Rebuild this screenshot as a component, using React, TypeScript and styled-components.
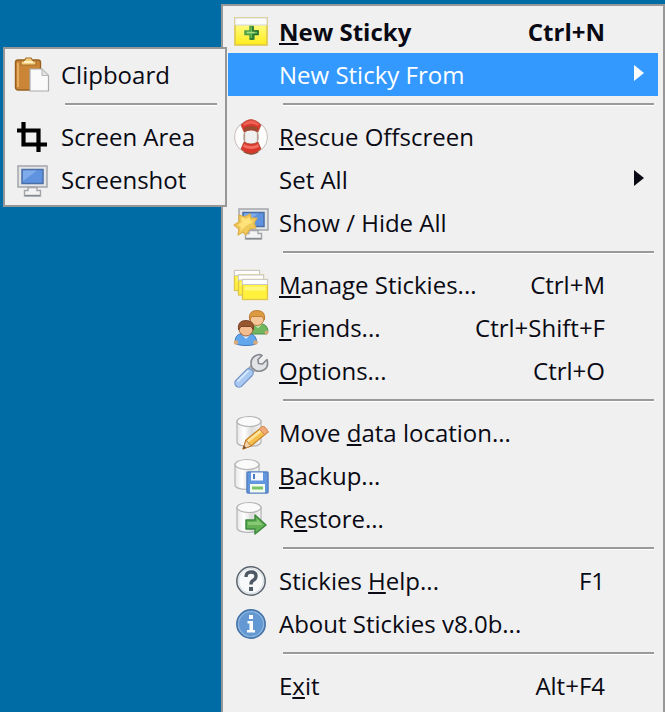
import React from 'react';
import styled, { createGlobalStyle } from 'styled-components';

const GlobalStyle = createGlobalStyle`
  * { box-sizing: border-box; }
  body {
    margin: 0;
    background: #006ca5;
    font-family: "Open Sans", "Noto Sans", sans-serif;
    font-size: 24px;
  }
`;

const Desktop = styled.main`
  display: flex;
  min-height: 100vh;
  padding: 4px 0 0 221px;
  background: #006ca5;
`;

const Menu = styled.div`
  position: relative;
  flex: 1;
  display: flex;
  flex-direction: column;
  padding: 4px 5px;
  background: #f0f0f0;
  border: 2px solid #979797;
  border-bottom-width: 0;
`;

const Submenu = styled.div`
  position: absolute;
  top: 41px;
  left: -220px;
  width: 224px;
  display: flex;
  flex-direction: column;
  padding: 4px 4px 4px 5px;
  background: #f0f0f0;
  border: 2px solid #979797;
`;

const Item = styled.button<{ $active?: boolean; $bold?: boolean }>`
  display: flex;
  align-items: center;
  height: 43px;
  padding: 0 0 0 4px;
  margin: 0;
  border: 0;
  text-align: left;
  font: inherit;
  font-weight: ${p => (p.$bold ? 700 : 400)};
  line-height: 43px;
  white-space: nowrap;
  color: ${p => (p.$active ? '#fff' : '#0a0a14')};
  background: ${p => (p.$active ? '#3399ff' : 'transparent')};
`;

const IconSlot = styled.span`
  display: flex;
  flex: none;
  width: 47px;
`;

const Label = styled.span`
  flex: 1;
  u {
    text-decoration-thickness: 2px;
    text-underline-offset: 2px;
    text-decoration-skip-ink: none;
  }
`;

const Shortcut = styled.kbd`
  font: inherit;
  margin-right: 53px;
`;

const Arrow = styled.svg`
  margin-right: 14px;
`;

const Divider = styled.hr`
  width: auto;
  height: 3px;
  margin: 7px 4px 9px 55px;
  border: 0;
  border-top: 2px solid #9a9a9a;
  border-bottom: 1px solid #fff;
`;

const Glyph = styled.svg`
  display: block;
  width: 37px;
  height: 37px;
`;

const Svg = ({ children }: { children: React.ReactNode }) => (
  <Glyph viewBox="0 0 37 37" aria-hidden="true">{children}</Glyph>
);

const NewNote = () => (
  <Svg>
    <defs>
      <linearGradient id="note" x1="0" y1="0" x2="0" y2="1">
        <stop offset="0" stopColor="#ffffa0" /><stop offset="1" stopColor="#ffec1c" />
      </linearGradient>
    </defs>
    <rect x="3" y="5" width="32" height="27" fill="url(#note)" stroke="#dfc64a" strokeWidth="1.6" />
    <rect x="3" y="5" width="32" height="7" fill="#fbfbfb" stroke="#d5d5d5" />
    <path d="M18 13.500h3v4.500h5v3h-4v5h-4v-4.500h-5V18h5z" fill="#66bb50" stroke="#4c9d45" strokeWidth="1.500" />
    <path d="M21 13.500V18h5v3.500h-5V26h-3" fill="none" stroke="#286f2c" strokeWidth="1.500" />
    <path d="M15 19.500h8" stroke="#a4dc83" strokeWidth="1.500" />
  </Svg>
);

const LifeRing = () => (
  <Svg>
    <circle cx="19" cy="19" r="12" fill="none" stroke="#c2b7b1" strokeWidth="9.500" />
    <circle cx="19" cy="19" r="12" fill="none" stroke="#fdfdfd" strokeWidth="7.800" />
    <path d="M9 7Q19-4 29 7L26 14Q19 10 12 14Z" fill="#d8382c" stroke="#bd5544" strokeWidth=".8" />
    <path d="M11 6Q19-1 27 6L26 8Q19 4 12 8Z" fill="#ed6054" />
    <path d="M12 10Q19 6 26 10L25.500 14Q19 10 12.500 14Z" fill="#9c4a30" />
    <path d="M9 31Q19 41 29 31L26 24Q19 28 12 24Z" fill="#d8382c" stroke="#a9523c" strokeWidth=".8" />
    <path d="M12 26Q19 30 26 26L27 29Q19 33 11 29Z" fill="#f36c60" />
    <path d="M12 34Q19 38 26 34" fill="none" stroke="#8e5236" strokeWidth="1.400" />
    <path d="M12.500 14v10M25.500 14v10" stroke="#b89c90" strokeWidth="1.300" />
  </Svg>
);

const MonitorShape = ({ x = 0 }: { x?: number }) => (
  <g transform={`translate(${x} 0)`}>
    <rect x="4" y="5" width="29" height="21" fill="#e4e5e7" stroke="#a3a5aa" strokeWidth="1.500" />
    <rect x="8" y="8.500" width="21" height="14" fill="#5f93df" stroke="#4a6fa6" strokeWidth="1.500" />
    <path d="M9 9.500h14L9 20z" fill="#8cb6ee" opacity=".7" />
    <path d="M14 26.500h9v3h3.500V35h-16v-5.500H14z" fill="#f3f3f3" stroke="#a3a5aa" strokeWidth="1.400" />
    <path d="M11 34.500h15" stroke="#85888d" strokeWidth="1.400" />
  </g>
);

const Monitor = () => <Svg><MonitorShape /></Svg>;

const ShowHide = () => (
  <Svg>
    <MonitorShape x={3} />
    <path d="M7 11l6 2 5-3 1 4h6l-3 5 2 5-6 1-4 6-3-3-5 3 1-6-5-4 5-3z" fill="#efca58" stroke="#e0b04a" strokeWidth="1.200" strokeLinejoin="round" />
    <path d="M9 13l5 2 4-2v3l3 2-7 4-6 5 1-4-3-2 4-3z" fill="#ffe27a" />
  </Svg>
);

const Notes = () => (
  <Svg>
    {[[2.5, 4.500], [6.500, 9], [10.500, 13.500]].map(([x, y]) => (
      <g key={x}>
        <rect x={x} y={y} width="25" height="20" fill="#fff13c" stroke="#dfc64a" strokeWidth="1.300" />
        <rect x={x} y={y} width="25" height="5" fill="#fdfdfd" stroke="#c9c9c9" />
        <path d={`M${x + 2} ${y + 7}h21v4h-21z`} fill="#fff97f" />
      </g>
    ))}
  </Svg>
);

const Friends = () => (
  <Svg>
    <path d="M18 24q0-8 6-9h5q6 0 7 7l-1 3H19z" fill="#6fb65e" stroke="#4b8f4a" />
    <path d="M22 15.500l4 4 4-4z" fill="#b8e0a6" />
    <circle cx="34.500" cy="23.500" r="2" fill="#d9a878" />
    <circle cx="25" cy="9.500" r="7" fill="#f5c698" stroke="#b8803f" />
    <path d="M17.500 11Q16 1.500 25 1.500T32.500 11L30 7.500H20z" fill="#dc9a41" stroke="#bf8038" />
    <path d="M3 34q0-9 6-9h9q6 0 7 9-3 2.500-11 2.500T3 34z" fill="#62a7ec" stroke="#3f78bd" />
    <path d="M10 26l4 4 4-4z" fill="#d9edff" />
    <circle cx="4" cy="33.500" r="2.200" fill="#d9a878" /><circle cx="23.500" cy="33.500" r="2.200" fill="#d9a878" />
    <circle cx="14" cy="20" r="7" fill="#f2bd91" stroke="#985f3c" />
    <path d="M6.500 21Q5 11.500 14 11.500T21.500 21L19 17.500H9z" fill="#98582f" stroke="#7d462b" />
  </Svg>
);

const Wrench = () => (
  <Svg>
    <path d="M15 22l8-8" stroke="#999ba0" strokeWidth="7" />
    <path d="M15 22l8-8" stroke="#e0e0e3" strokeWidth="4.500" />
    <path d="M20 16q-3-8 3-12 4-2.500 7-.500l-4 4 .500 4 4 .500 4.500-4.500q2 7-2.500 10-5 3-9 1z" fill="#e2e3e5" stroke="#85888f" strokeWidth="1.600" strokeLinejoin="round" />
    <path d="M7 31l10-10" stroke="#7092c5" strokeWidth="9.500" strokeLinecap="round" />
    <path d="M7 31l10-10" stroke="#a9c8f2" strokeWidth="7" strokeLinecap="round" />
    <path d="M6 29l10-10" stroke="#d5e7ff" strokeWidth="2" strokeLinecap="round" />
  </Svg>
);

const Cylinder = ({ x = 0 }: { x?: number }) => (
  <g transform={`translate(${x} 0)`}>
    <defs>
      <linearGradient id="can">
        <stop offset="0" stopColor="#e7e7e7" /><stop offset=".3" stopColor="#fff" />
        <stop offset=".6" stopColor="#dcdcdc" /><stop offset="1" stopColor="#f5f5f5" />
      </linearGradient>
    </defs>
    <path d="M3 7v21c0 6 24 6 24 0V7z" fill="url(#can)" stroke="#b4b4b4" strokeWidth="1.200" />
    <ellipse cx="15" cy="7.500" rx="12" ry="5" fill="#fafafa" stroke="#b4b4b4" strokeWidth="1.200" />
  </g>
);

const MoveData = () => (
  <Svg>
    <Cylinder x={2} />
    <path d="M11 35l3-9L30 13l6 5-17 14z" fill="#f5be4d" stroke="#c9862d" strokeWidth="1.300" strokeLinejoin="round" />
    <path d="M15 28l16-13" stroke="#ffe59b" strokeWidth="2.500" />
    <path d="M27 15l3-2.500q3-1 6 5L33 21z" fill="#efaa76" stroke="#d58a51" />
    <path d="M11 35l3-9 5 6z" fill="#f5d5a7" stroke="#b97b3a" />
    <path d="M11 35l1-3.500 2 2.200z" fill="#62452d" />
  </Svg>
);

const Backup = () => (
  <Svg>
    <Cylinder />
    <rect x="15" y="15" width="21" height="21" rx="1" fill="#6297df" stroke="#5580c0" strokeWidth="1.500" />
    <rect x="19" y="15.500" width="12" height="8" fill="#f5f9ff" />
    <rect x="21" y="17" width="2" height="5" fill="#4c7bc3" />
    <rect x="18" y="27" width="15" height="8.500" fill="#f3fbef" />
    <path d="M20 31h11" stroke="#79c566" strokeWidth="3" />
  </Svg>
);

const Restore = () => (
  <Svg>
    <Cylinder x={2} />
    <path d="M14 20h9v-5l11 10-11 9v-5h-9z" fill="#63b154" stroke="#3d8a3e" strokeWidth="1.500" strokeLinejoin="round" />
    <path d="M16 22h9v-3l6 6H16z" fill="#86c873" />
  </Svg>
);

const Help = () => (
  <Svg>
    <circle cx="19" cy="19" r="14.200" fill="#f6f8fa" stroke="#59626c" strokeWidth="1.500" />
    <circle cx="19" cy="19" r="12.500" fill="none" stroke="#d2dadf" />
    <path d="M14 15q0-5 5-5t5 4q0 3-3 4.500-2 1-2 4" fill="none" stroke="#4d5964" strokeWidth="3.400" />
    <rect x="17" y="25" width="4" height="4" fill="#4d5964" />
  </Svg>
);

const Info = () => (
  <Svg>
    <circle cx="19" cy="19" r="14.200" fill="#6398d2" stroke="#4571a5" strokeWidth="1.500" />
    <circle cx="19" cy="19" r="12.500" fill="none" stroke="#8fb6e0" strokeWidth="1.200" />
    <rect x="17" y="10" width="4" height="4" fill="#fff" />
    <path d="M15.500 16H21v9h2v2.500h-8V25h2.500v-6.500h-2z" fill="#fff" />
  </Svg>
);

const Clipboard = () => (
  <Svg>
    <rect x="1.500" y="4" width="25" height="30" rx="2.500" fill="#cb8536" stroke="#97601f" strokeWidth="1.400" />
    <path d="M4 7v24" stroke="#e5ad61" strokeWidth="2" />
    <path d="M7 9V5h3l2-3h5l2 3h3v4z" fill="#f3cf80" stroke="#a66c27" strokeWidth="1.200" />
    <path d="M10 6h9" stroke="#fff0c4" strokeWidth="2" />
    <path d="M16 13h12l6.500 6.500V35H16z" fill="#fafafa" stroke="#aaa" strokeWidth="1.200" />
    <path d="M28 13v6.500h6.500z" fill="#e3e3e3" stroke="#b5b5b5" />
  </Svg>
);

const Crop = () => (
  <Svg>
    <path d="M9.500 4v22.500H33M3 12.500h21.500V34" fill="none" stroke="#000" strokeWidth="4.200" />
  </Svg>
);

type Entry = {
  label: React.ReactNode;
  icon?: React.ReactNode;
  keys?: string;
  bold?: boolean;
  active?: boolean;
  sub?: boolean;
};

const mainGroups: Entry[][] = [
  [
    { label: <><u>N</u>ew Sticky</>, icon: <NewNote />, keys: 'Ctrl+N', bold: true },
    { label: 'New Sticky From', active: true, sub: true },
  ],
  [
    { label: <><u>R</u>escue Offscreen</>, icon: <LifeRing /> },
    { label: 'Set All', sub: true },
    { label: 'Show / Hide All', icon: <ShowHide /> },
  ],
  [
    { label: <><u>M</u>anage Stickies...</>, icon: <Notes />, keys: 'Ctrl+M' },
    { label: <><u>F</u>riends...</>, icon: <Friends />, keys: 'Ctrl+Shift+F' },
    { label: <><u>O</u>ptions...</>, icon: <Wrench />, keys: 'Ctrl+O' },
  ],
  [
    { label: <>Move <u>d</u>ata location...</>, icon: <MoveData /> },
    { label: <><u>B</u>ackup...</>, icon: <Backup /> },
    { label: <>R<u>e</u>store...</>, icon: <Restore /> },
  ],
  [
    { label: <>Stickies <u>H</u>elp...</>, icon: <Help />, keys: 'F1' },
    { label: 'About Stickies v8.0b...', icon: <Info /> },
  ],
  [{ label: <>E<u>x</u>it</>, keys: 'Alt+F4' }],
];

const subGroups: Entry[][] = [
  [{ label: 'Clipboard', icon: <Clipboard /> }],
  [
    { label: 'Screen Area', icon: <Crop /> },
    { label: 'Screenshot', icon: <Monitor /> },
  ],
];

const Groups = ({ groups }: { groups: Entry[][] }) => (
  <>
    {groups.map((group, g) => (
      <React.Fragment key={g}>
        {g > 0 && <Divider />}
        {group.map((e, i) => (
          <Item key={i} type="button" role="menuitem" aria-haspopup={e.sub ? 'menu' : undefined} $active={e.active} $bold={e.bold}>
            <IconSlot>{e.icon}</IconSlot>
            <Label>{e.label}</Label>
            {e.keys && <Shortcut>{e.keys}</Shortcut>}
            {e.sub && (
              <Arrow width="10" height="20" viewBox="0 0 10 20" aria-hidden="true">
                <path d="M0 0L10 8 0 16z" fill="currentColor" />
              </Arrow>
            )}
          </Item>
        ))}
      </React.Fragment>
    ))}
  </>
);

export default function App() {
  return (
    <>
      <GlobalStyle />
      <Desktop>
        <Menu role="menu" aria-label="Stickies">
          <Groups groups={mainGroups} />
          <Submenu role="menu" aria-label="New Sticky From">
            <Groups groups={subGroups} />
          </Submenu>
        </Menu>
      </Desktop>
    </>
  );
}
